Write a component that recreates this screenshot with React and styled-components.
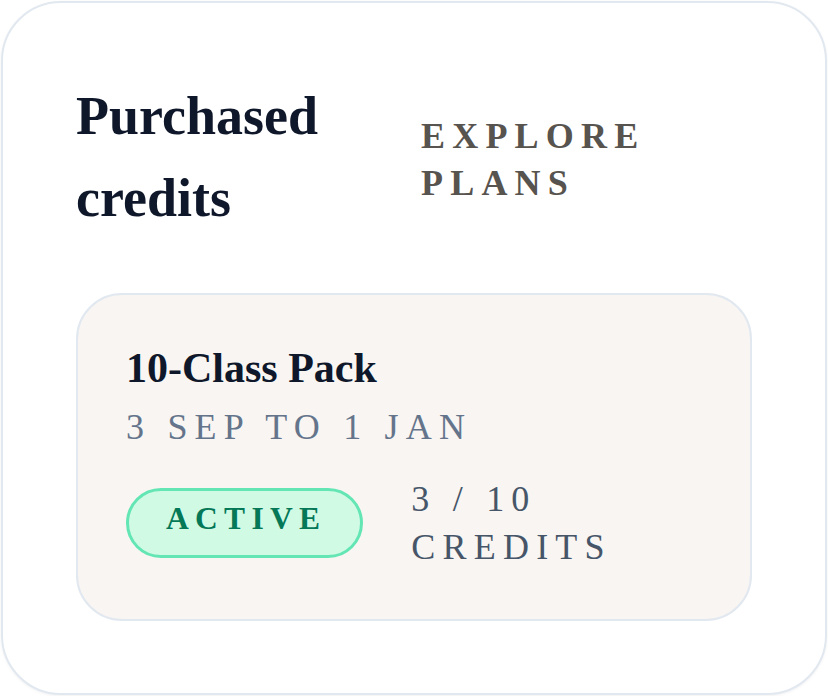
import React from "react";
import styled, { createGlobalStyle } from "styled-components";

const GlobalStyle = createGlobalStyle`
  * {
    box-sizing: border-box;
  }
  body {
    margin: 0;
    background: #ffffff;
    font-family: "Liberation Serif", "Times New Roman", serif;
  }
`;

const Card = styled.section`
  margin: 1px;
  padding: 72px 73px;
  background: #ffffff;
  border: 2px solid #e2e8f0;
  border-radius: 60px;
  box-shadow: 0 1px 3px rgba(15, 23, 42, 0.06);
`;

const Header = styled.header`
  display: grid;
  grid-template-columns: 1fr 1fr;
  column-gap: 14px;
  align-items: center;
`;

const Title = styled.h2`
  margin: 0;
  font-size: 54px;
  line-height: 82px;
  font-weight: 700;
  color: #0f172a;
`;

const ExploreLink = styled.a`
  padding-top: 6px;
  font-size: 36px;
  line-height: 47px;
  font-weight: 700;
  letter-spacing: 0.2em;
  text-transform: uppercase;
  color: #57534e;
  text-decoration: none;
  cursor: pointer;
`;

const PackCard = styled.article`
  margin-top: 54px;
  padding: 48px;
  background: #f8f5f2;
  border: 2px solid #e2e8f0;
  border-radius: 46px;
`;

const PackName = styled.h3`
  margin: 0;
  font-size: 42px;
  line-height: 50px;
  font-weight: 700;
  color: #0f172a;
`;

const Dates = styled.p`
  margin: 10px 0 0;
  font-size: 36px;
  line-height: 48px;
  letter-spacing: 0.2em;
  text-transform: uppercase;
  color: #64748b;
`;

const StatusRow = styled.div`
  display: flex;
  align-items: center;
  gap: 48px;
  margin-top: 24px;
`;

const Badge = styled.span`
  flex-shrink: 0;
  padding: 11px 34px 19px 37px;
  border: 3px solid ${(p) => p.$border};
  border-radius: 999px;
  background: ${(p) => p.$bg};
  color: ${(p) => p.$color};
  font-size: 31.5px;
  line-height: 34px;
  font-weight: 700;
  letter-spacing: 0.2em;
  text-transform: uppercase;
`;

const Credits = styled.span`
  font-size: 36px;
  line-height: 48px;
  letter-spacing: 0.2em;
  text-transform: uppercase;
  color: #475569;
`;

const statusColors = {
  active: { bg: "#d1fae5", border: "#63e6b4", color: "#047857" },
};

const pack = {
  name: "10-Class Pack",
  from: "3 Sep",
  to: "1 Jan",
  status: "active",
  used: 3,
  total: 10,
};

export default function App() {
  const colors = statusColors[pack.status];
  return (
    <>
      <GlobalStyle />
      <Card>
        <Header>
          <Title>Purchased credits</Title>
          <ExploreLink>Explore plans</ExploreLink>
        </Header>
        <PackCard>
          <PackName>{pack.name}</PackName>
          <Dates>
            {pack.from} to {pack.to}
          </Dates>
          <StatusRow>
            <Badge $bg={colors.bg} $border={colors.border} $color={colors.color}>
              {pack.status}
            </Badge>
            <Credits>
              {pack.used} / {pack.total} credits
            </Credits>
          </StatusRow>
        </PackCard>
      </Card>
    </>
  );
}
